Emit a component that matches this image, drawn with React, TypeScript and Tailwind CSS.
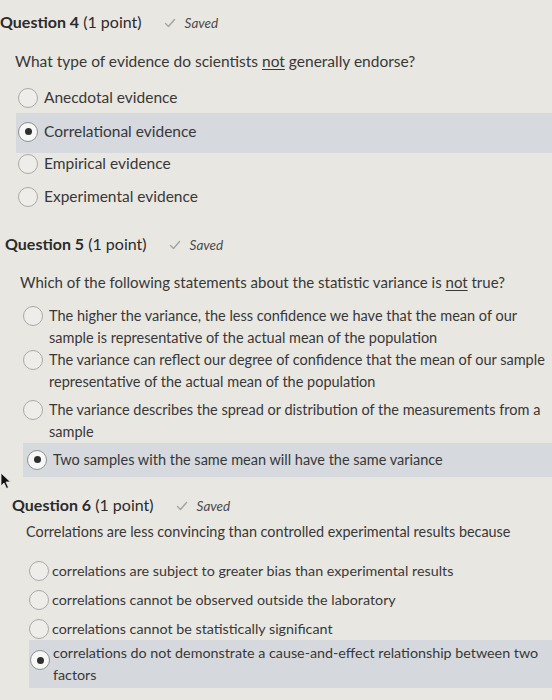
import React from "react";

// Quiz page (Canvas-style) photographed off a screen: three questions, radio options,
// the chosen option sits on a grey band.

type Option = { text: string; checked?: boolean };

function Radio({ checked }: { checked?: boolean }) {
  return (
    <span
      className={`flex h-[20px] w-[20px] shrink-0 items-center justify-center rounded-full border ${
        checked ? "border-[#8d8f92] bg-[#f7f7f5]" : "border-[#a9a9a7] bg-[#eeede9]"
      }`}
    >
      {checked && <span className="h-[7px] w-[7px] rounded-full bg-[#2e2f31]" />}
    </span>
  );
}

function Saved() {
  return (
    <span className="flex items-center gap-[9px] text-[13.5px] italic text-[#4a4a4a]">
      <svg width="12" height="10" viewBox="0 0 12 10" fill="none">
        <path d="M1.5 5.5 L4.5 8.5 L10.5 1.5" stroke="#a3a3a3" strokeWidth="1.4" strokeLinecap="round" strokeLinejoin="round" />
      </svg>
      Saved
    </span>
  );
}

function Header({ n }: { n: number }) {
  return (
    <div className="flex items-baseline gap-[22px]">
      <span className="text-[16px] text-[#2b2b2b]">
        <span className="font-bold">Question {n}</span> (1 point)
      </span>
      <Saved />
    </div>
  );
}

export default function App() {
  const q4: Option[] = [
    { text: "Anecdotal evidence" },
    { text: "Correlational evidence", checked: true },
    { text: "Empirical evidence" },
    { text: "Experimental evidence" },
  ];
  const q5: Option[] = [
    { text: "The higher the variance, the less confidence we have that the mean of our sample is representative of the actual mean of the population" },
    { text: "The variance can reflect our degree of confidence that the mean of our sample representative of the actual mean of the population" },
    { text: "The variance describes the spread or distribution of the measurements from a sample" },
    { text: "Two samples with the same mean will have the same variance", checked: true },
  ];
  const q6: Option[] = [
    { text: "correlations are subject to greater bias than experimental results" },
    { text: "correlations cannot be observed outside the laboratory" },
    { text: "correlations cannot be statistically significant" },
    { text: "correlations do not demonstrate a cause-and-effect relationship between two factors", checked: true },
  ];

  return (
    <div
      className="relative h-[700px] w-[552px] overflow-hidden bg-[#e9e7e2] text-[#383838]"
      style={{ fontFamily: "Lato, 'Open Sans', sans-serif" }}
    >
      {/* Question 4 */}
      <section className="pt-[10px]">
        <Header n={4} />
        <p className="mt-[16px] pl-[15px] text-[15.5px]">
          What type of evidence do scientists <span className="underline underline-offset-2">not</span> generally endorse?
        </p>
        <ul className="mt-[8px] flex flex-col">
          {q4.map((o) => (
            <li
              key={o.text}
              className={`ml-[16px] flex items-center gap-[6px] pl-[2px] text-[15.5px] ${
                o.checked ? "-mb-[6px] -mt-[1px] h-[40px] bg-[#d6d9dd] pb-[3px]" : "h-[33px]"
              }`}
            >
              <Radio checked={o.checked} />
              <span>{o.text}</span>
            </li>
          ))}
        </ul>
      </section>

      {/* Question 5 */}
      <section className="mt-[19px] pl-[5px]">
        <Header n={5} />
        <p className="mt-[15px] pl-[15px] text-[15px]">
          Which of the following statements about the statistic variance is <span className="underline underline-offset-2">not</span> true?
        </p>
        <ul className="mt-[11px] flex flex-col pl-[18px]">
          {q5.map((o, i) => (
            <li
              key={o.text}
              className={`flex gap-[6px] text-[14.5px] leading-[22px] ${
                o.checked ? "items-center bg-[#d6d9dd] py-[6px] pl-[4px]" : "items-start"
              } ${i === 2 ? "mt-[6px]" : ""}`}
            >
              <span className={o.checked ? "" : "pt-[1px]"}>
                <Radio checked={o.checked} />
              </span>
              <span className="w-[505px]">{o.text}</span>
            </li>
          ))}
        </ul>
      </section>

      {/* Question 6 */}
      <section className="mt-[16px] pl-[12px]">
        <Header n={6} />
        <p className="mt-[4px] pl-[14px] text-[14.4px]">
          Correlations are less convincing than controlled experimental results because
        </p>
        <ul className="mt-[14px] flex flex-col pl-[17px]">
          {q6.map((o) => (
            <li
              key={o.text}
              className={`flex gap-[3px] text-[14.3px] leading-[22px] ${
                o.checked ? "-mt-[3px] items-start bg-[#d5d9dd] py-[2px] pl-[1px]" : "h-[29px] items-center"
              }`}
            >
              <span className={o.checked ? "pt-[8px]" : ""}>
                <Radio checked={o.checked} />
              </span>
              <span className="w-[495px]">{o.text}</span>
            </li>
          ))}
        </ul>
      </section>

      {/* mouse pointer */}
      <svg className="absolute left-[0px] top-[472px]" width="12" height="18" viewBox="0 0 12 18">
        <path d="M1 1 L1 14 L4 11 L6.5 16.5 L8.5 15.5 L6 10 L10.5 10 Z" fill="#111" stroke="#eee" strokeWidth="0.8" />
      </svg>
    </div>
  );
}
